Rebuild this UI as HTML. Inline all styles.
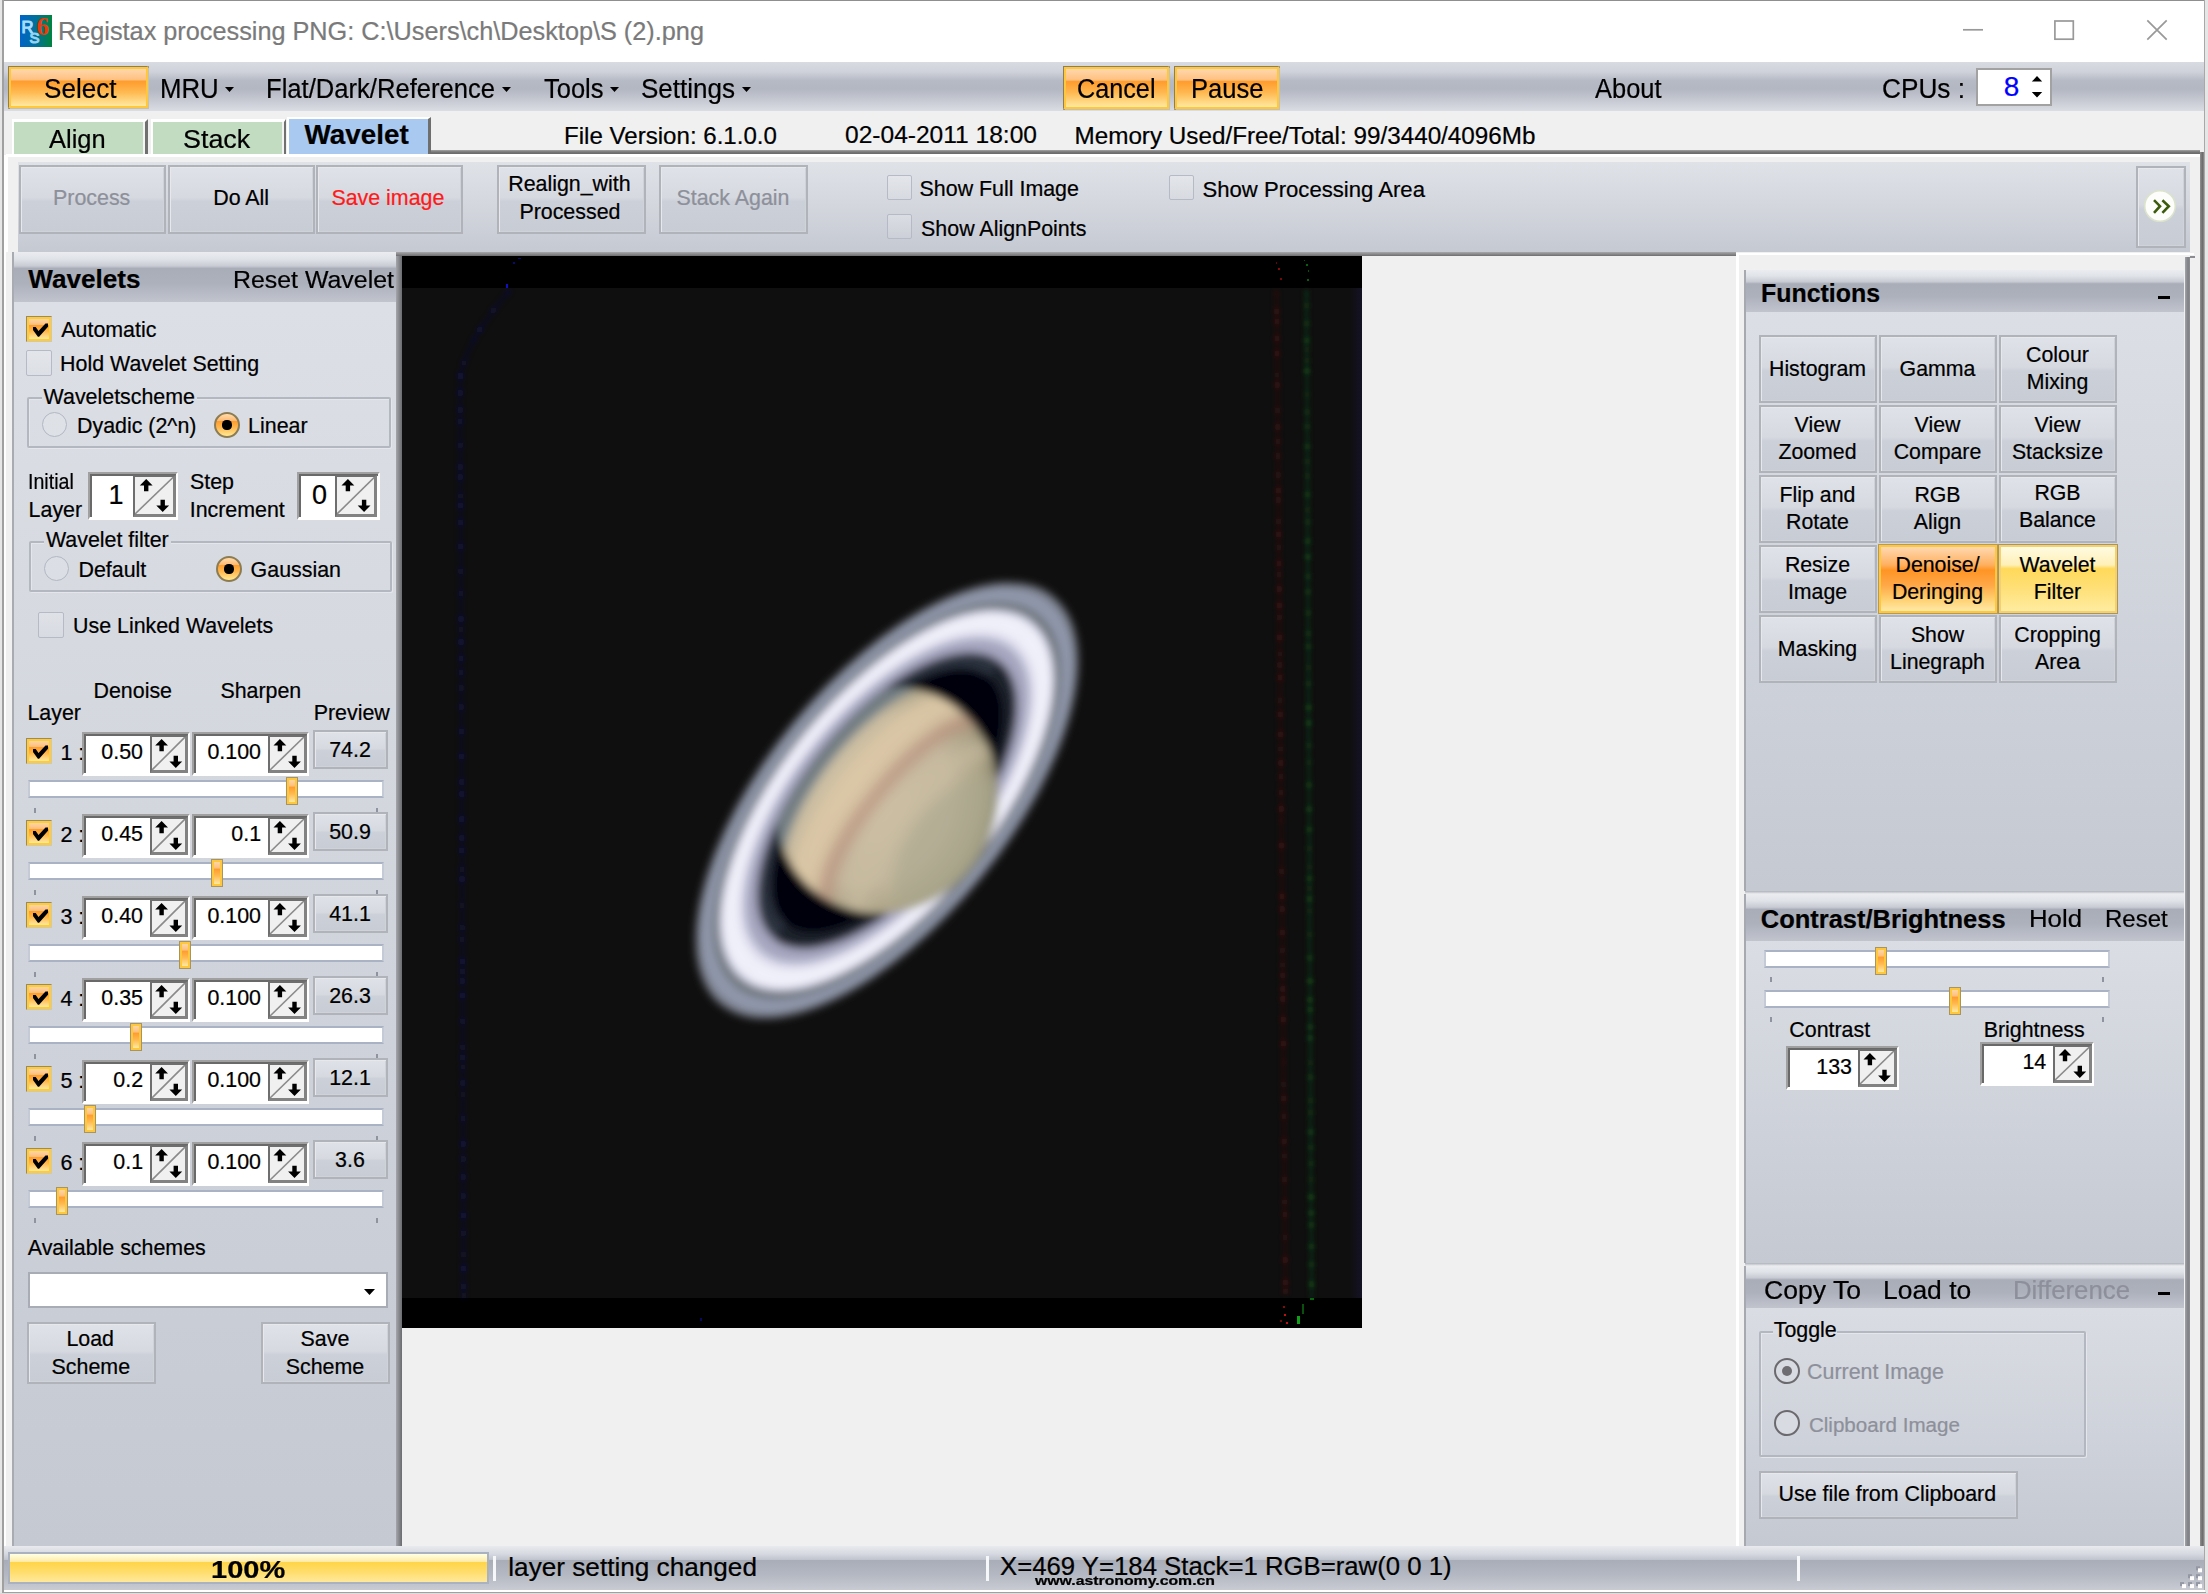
<!DOCTYPE html>
<html><head><meta charset="utf-8"><title>Registax</title>
<style>
html,body{margin:0;padding:0;}
body{width:2208px;height:1594px;position:relative;overflow:hidden;background:#f0f0f0;font-family:"Liberation Sans",sans-serif;}
.t{position:absolute;white-space:pre;-webkit-text-stroke:0.22px;}
div{box-sizing:border-box;}

.btn{position:absolute;border:2px solid #b0b3ba;box-shadow:inset 1px 1px 0 #e6e8ec, inset -1px -1px 0 #cfd2d9;background:linear-gradient(#dfe2e8 0%,#d6d9e0 47%,#ccd0d8 53%,#c8ccd5 100%);}
.obtn{position:absolute;border:2px solid #ffc83c;box-shadow:-1px -1px 0 0 #8e7e56, 1px 1px 0 0 #c8c0a8, 1px -1px 0 0 #a89870, -1px 1px 0 0 #a89870;background:linear-gradient(#ffd8ac 0%,#ffc080 29%,#ff9c2c 33%,#ffb850 62%,#ffe9a0 100%);}
.hdr{position:absolute;background:linear-gradient(#eaecf0 0%,#e0e3e8 14%,#c8cbd3 28%,#a9adb8 33%,#adb1bc 63%,#c1c4cd 100%);}
.panel{position:absolute;background:linear-gradient(#dde0e6,#c5c9d2);}
.cb{position:absolute;width:26px;height:26px;border:1.5px solid #b6bac4;border-radius:2px;background:linear-gradient(rgba(255,255,255,.22),rgba(255,255,255,.05));}
.cbc{position:absolute;width:26px;height:26px;border:1px solid #9a8a62;border-right-color:#cfc8b4;border-bottom-color:#cfc8b4;background:#ffcc33;}
.cbc i{position:absolute;left:2px;top:2px;right:2px;bottom:2px;background:linear-gradient(#ffd6a4 0%,#ffbe7c 28%,#ff9c2c 32%,#ffb850 62%,#ffe9a0 100%);}
.cbc svg{position:absolute;left:0;top:0;}
.rd{position:absolute;width:25px;height:25px;border-radius:50%;border:1.5px solid #b2b7c2;background:rgba(255,255,255,.12);}
.rdc{position:absolute;width:26px;height:26px;border-radius:50%;border:2px solid #8c7c54;background:linear-gradient(#ffdcaa 0%,#ffba74 30%,#ff9c2c 33%,#ffb850 62%,#ffe994 100%);}
.rdc i{position:absolute;left:6px;top:6px;width:10px;height:10px;border-radius:45%;background:#000;}
.sp{position:absolute;background:#fff;border-top:2px solid #a0a0a0;border-left:2px solid #a0a0a0;border-right:2px solid #fff;border-bottom:3px solid #fff;box-shadow:inset 2px 2px 0 #696969;}
.sb{position:absolute;background:#f0f0f0;border:2px solid #6e6e6e;border-right:3px solid #828282;border-bottom:3px solid #828282;}
.sb svg{position:absolute;left:0;top:0;}
.trk{position:absolute;background:#fff;border:2px solid #aab3c3;border-left-color:#c4cad6;border-right-color:#c4cad6;}
.thm{position:absolute;width:10px;height:26px;border:2px solid #ffc83c;box-shadow:0 0 0 1px #a89460;background:linear-gradient(#ffd6a4 0%,#ffbe7c 28%,#ff9c2c 32%,#ffb850 62%,#ffe9a0 100%);}
.tick{position:absolute;width:2px;height:5px;background:#8e939e;}
.gb{position:absolute;border:2px solid #b3b7c0;box-shadow:1px 1px 0 #e4e6eb, inset 1px 1px 0 #e4e6eb;border-radius:2px;}

</style></head><body>
<div style="position:absolute;left:0px;top:0px;width:2208px;height:1594px;background:#f0f0f0;"></div>
<div style="position:absolute;left:4px;top:1px;width:2200px;height:61px;background:#fff;"></div>
<div style="position:absolute;left:0px;top:0px;width:2208px;height:1px;background:#8f8f8f;"></div>
<div style="position:absolute;left:0px;top:0px;width:2px;height:1594px;background:#e6e6e6;"></div>
<div style="position:absolute;left:2px;top:0px;width:2px;height:1594px;background:#a0a0a0;"></div>
<div style="position:absolute;left:4px;top:62px;width:2px;height:1528px;background:#fff;"></div>
<div style="position:absolute;left:2204px;top:0px;width:1px;height:1594px;background:#a8a8a8;"></div>
<div style="position:absolute;left:2205px;top:0px;width:3px;height:1594px;background:#e6e6e6;"></div>
<svg style="position:absolute;left:20px;top:15px" width="32" height="32" viewBox="0 0 32 32">
<defs><linearGradient id="ig" x1="0" x2="1"><stop offset="0" stop-color="#0064c8"/><stop offset=".5" stop-color="#00709a"/><stop offset="1" stop-color="#00843c"/></linearGradient></defs>
<rect width="32" height="32" fill="url(#ig)"/>
<text x="1.6" y="17.6" font-family="Liberation Sans" font-size="16.5" fill="#a8dcff" stroke="#a8dcff" stroke-width="1.1">R</text>
<text x="9.4" y="28.4" font-family="Liberation Sans" font-size="15" fill="#94d2f2" stroke="#94d2f2" stroke-width="1.1">S</text>
<text x="16.6" y="19.8" font-family="Liberation Serif" font-size="25" font-weight="bold" fill="#f03808">6</text>
</svg>
<div class="t" style="left:58.0px;top:16.6px;font-size:25.27px;line-height:29.03px;color:#7a7a7a;">Registax processing PNG: C:\Users\ch\Desktop\S (2).png</div>
<svg style="position:absolute;left:1950px;top:10px" width="240" height="42" viewBox="0 0 240 42" fill="none" stroke="#999" stroke-width="1.7">
<line x1="13" y1="19.8" x2="33" y2="19.8"/>
<rect x="104.9" y="11" width="18.4" height="18.2"/>
<path d="M197.3 10.3 L216.7 29.7 M216.7 10.3 L197.3 29.7"/>
</svg>
<div style="position:absolute;left:4px;top:62px;width:2200px;height:49px;background:linear-gradient(#d8dbe1 0%,#cfd2da 20%,#b6bac5 38%,#b3b7c2 55%,#c6c9d2 78%,#dadde3 100%);"></div>
<div class="obtn" style="left:9px;top:67px;width:139px;height:41px"></div>
<div class="t" style="left:43.5px;top:74.3px;font-size:27.00px;line-height:31.02px;color:#000;transform:scaleX(0.9661);transform-origin:0 0;">Select</div>
<div class="t" style="left:160.3px;top:74.3px;font-size:27.00px;line-height:31.02px;color:#000;transform:scaleX(0.9546);transform-origin:0 0;">MRU</div>
<svg style="position:absolute;left:224.5px;top:87px" width="9" height="5" viewBox="0 0 9 5"><path d="M0 0H9L4.5 5Z" fill="#000"/></svg>
<div class="t" style="left:266.0px;top:74.3px;font-size:27.00px;line-height:31.02px;color:#000;transform:scaleX(0.9479);transform-origin:0 0;">Flat/Dark/Reference</div>
<svg style="position:absolute;left:502px;top:87px" width="9" height="5" viewBox="0 0 9 5"><path d="M0 0H9L4.5 5Z" fill="#000"/></svg>
<div class="t" style="left:543.5px;top:74.3px;font-size:27.00px;line-height:31.02px;color:#000;transform:scaleX(0.9440);transform-origin:0 0;">Tools</div>
<svg style="position:absolute;left:609.5px;top:87px" width="9" height="5" viewBox="0 0 9 5"><path d="M0 0H9L4.5 5Z" fill="#000"/></svg>
<div class="t" style="left:641.0px;top:74.3px;font-size:27.00px;line-height:31.02px;color:#000;transform:scaleX(0.9635);transform-origin:0 0;">Settings</div>
<svg style="position:absolute;left:741.5px;top:87px" width="9" height="5" viewBox="0 0 9 5"><path d="M0 0H9L4.5 5Z" fill="#000"/></svg>
<div class="obtn" style="left:1063.5px;top:67px;width:105.5px;height:41.5px"></div>
<div class="obtn" style="left:1174.8px;top:67px;width:104.5px;height:41.5px"></div>
<div class="t" style="left:1076.5px;top:74.3px;font-size:27.00px;line-height:31.02px;color:#000;transform:scaleX(0.9340);transform-origin:0 0;">Cancel</div>
<div class="t" style="left:1190.5px;top:74.3px;font-size:27.00px;line-height:31.02px;color:#000;transform:scaleX(0.9470);transform-origin:0 0;">Pause</div>
<div class="t" style="left:1594.5px;top:74.3px;font-size:27.00px;line-height:31.02px;color:#000;transform:scaleX(0.9425);transform-origin:0 0;">About</div>
<div class="t" style="left:1882.0px;top:74.3px;font-size:27.00px;line-height:31.02px;color:#000;transform:scaleX(0.9707);transform-origin:0 0;">CPUs :</div>
<div style="position:absolute;left:1976px;top:68px;width:76px;height:38px;background:#fff;border:2px solid #a2a2a2;"></div>
<div class="t" style="left:2003.8px;top:70.9px;font-size:28.00px;line-height:32.17px;color:#0000ff;">8</div>
<svg style="position:absolute;left:2031px;top:73px" width="12" height="28" viewBox="0 0 12 28"><path d="M0.8 8.6H11.2L6 3Z M0.8 19H11.2L6 24.6Z" fill="#000"/></svg>
<div style="position:absolute;left:4px;top:111px;width:2197px;height:44px;background:#f0f0f0;"></div>
<div style="position:absolute;left:11.5px;top:118.5px;width:136px;height:35.5px;background:#c1dcc1;border-left:2px solid #fff;border-top:3px solid #fff;border-right:3px solid #707070;box-shadow:inset -2px 0 0 #f4f4f4;"></div>
<div style="position:absolute;left:151px;top:118.5px;width:135px;height:35.5px;background:#c1dcc1;border-left:2px solid #fff;border-top:3px solid #fff;border-right:2px solid #707070;box-shadow:inset -2px 0 0 #f4f4f4;"></div>
<div style="position:absolute;left:287px;top:116.5px;width:144px;height:37.5px;background:#a9c9f0;border-left:2px solid #fff;border-top:2px solid #fff;border-right:3px solid #6e6e6e;"></div>
<div class="t" style="left:48.7px;top:123.7px;font-size:26.60px;line-height:30.56px;color:#000;transform:scaleX(0.9569);transform-origin:0 0;">Align</div>
<div class="t" style="left:183.0px;top:123.7px;font-size:26.60px;line-height:30.56px;color:#000;transform:scaleX(1.0101);transform-origin:0 0;">Stack</div>
<div class="t" style="left:304.6px;top:118.8px;font-size:27.82px;line-height:31.96px;color:#000;font-weight:bold;">Wavelet</div>
<div style="position:absolute;left:431px;top:150px;width:1769px;height:4px;background:linear-gradient(#a4a4a4,#777 50%,#6a6a6a);"></div>
<div style="position:absolute;left:6px;top:154px;width:2194px;height:2.5px;background:#fff;"></div>
<div style="position:absolute;left:6px;top:156px;width:2px;height:96px;background:#fff;"></div>
<div style="position:absolute;left:2200px;top:152px;width:4px;height:1394px;background:linear-gradient(90deg,#909090,#6c6c6c 60%,#8a8a8a);"></div>
<div style="position:absolute;left:396px;top:252px;width:1340px;height:4px;background:linear-gradient(#a8a8aa,#6e6e70);"></div>
<div style="position:absolute;left:1736px;top:252.5px;width:458px;height:2.5px;background:#fff;"></div>
<div class="t" style="left:564.0px;top:121.8px;font-size:24.10px;line-height:27.69px;color:#000;">File Version: 6.1.0.0</div>
<div class="t" style="left:845.0px;top:121.4px;font-size:24.55px;line-height:28.21px;color:#000;">02-04-2011 18:00</div>
<div class="t" style="left:1074.5px;top:121.6px;font-size:24.26px;line-height:27.87px;color:#000;">Memory Used/Free/Total: 99/3440/4096Mb</div>
<div style="position:absolute;left:18px;top:162px;width:2172px;height:90px;background:linear-gradient(#dfe2e7 0%,#d3d6dd 50%,#c5c9d2 100%);"></div>
<div class="btn" style="left:18.5px;top:164.5px;width:147.5px;height:69px"></div>
<div class="btn" style="left:167.5px;top:164.5px;width:147px;height:69px"></div>
<div class="btn" style="left:315.5px;top:164.5px;width:147px;height:69px"></div>
<div class="btn" style="left:496.5px;top:164.5px;width:149px;height:69px"></div>
<div class="btn" style="left:658.5px;top:164.5px;width:149px;height:69px"></div>
<div class="t" style="left:53.0px;top:185.9px;font-size:21.40px;line-height:24.59px;color:#8d909a;">Process</div>
<div class="t" style="left:213.2px;top:185.9px;font-size:21.40px;line-height:24.59px;color:#000;">Do All</div>
<div class="t" style="left:331.4px;top:185.9px;font-size:21.40px;line-height:24.59px;color:#ff1a1a;">Save image</div>
<div class="t" style="left:508.2px;top:172.1px;font-size:21.40px;line-height:24.59px;color:#000;">Realign_with</div>
<div class="t" style="left:519.4px;top:200.1px;font-size:21.40px;line-height:24.59px;color:#000;">Processed</div>
<div class="t" style="left:676.5px;top:185.9px;font-size:21.40px;line-height:24.59px;color:#8d909a;">Stack Again</div>
<div class="cb" style="left:886.5px;top:174.5px;width:25px;height:25px"></div>
<div class="cb" style="left:886.5px;top:214px;width:25px;height:25px"></div>
<div class="cb" style="left:1168.5px;top:174.5px;width:25px;height:25px"></div>
<div class="t" style="left:919.6px;top:177.1px;font-size:21.40px;line-height:24.59px;color:#000;">Show Full Image</div>
<div class="t" style="left:921.1px;top:216.6px;font-size:21.40px;line-height:24.59px;color:#000;">Show AlignPoints</div>
<div class="t" style="left:1202.5px;top:176.5px;font-size:22.11px;line-height:25.41px;color:#000;">Show Processing Area</div>
<div class="btn" style="left:2136px;top:166px;width:50px;height:82px"></div>
<svg style="position:absolute;left:2142px;top:188px" width="36" height="36" viewBox="0 0 36 36"><circle cx="18" cy="18" r="15.3" fill="#fdfefb" stroke="#dbe3cc" stroke-width="1.6"/><path d="M12 12.2l6 6-6 6.6M20.4 12.2l6.4 6-6.4 6.6" fill="none" stroke="#3c5c0c" stroke-width="2.6"/></svg>
<div style="position:absolute;left:12px;top:252px;width:2px;height:1294px;background:#a8abb2;"></div>
<div class="panel" style="left:14px;top:252px;width:382px;height:1294px"></div>
<div class="hdr" style="left:14px;top:252px;width:382px;height:50px"></div>
<div style="position:absolute;left:396px;top:256px;width:6px;height:1290px;background:linear-gradient(90deg,#a4a6ab,#808287 60%,#6a6c70);"></div>
<div class="t" style="left:28.3px;top:264.8px;font-size:26.08px;line-height:29.97px;color:#000;font-weight:bold;">Wavelets</div>
<div class="t" style="left:233.0px;top:265.7px;font-size:24.60px;line-height:28.27px;color:#000;transform:scaleX(1.0123);transform-origin:0 0;">Reset Wavelet</div>
<div class="cbc" style="left:26px;top:316px"><i></i><svg width="26" height="26" viewBox="-0.5 -0.5 26 26"><path d="M5.5 9.5 L8.2 9.5 L11 13.6 L18 6 L20.5 6 L20.5 9.2 L11.6 19.2 L10.4 19.2 L5.5 12.6 Z" fill="#000"/></svg></div>
<div class="t" style="left:61.3px;top:317.9px;font-size:21.40px;line-height:24.59px;color:#000;">Automatic</div>
<div class="cb" style="left:26px;top:350px;width:26px;height:26px"></div>
<div class="t" style="left:60.1px;top:351.9px;font-size:21.40px;line-height:24.59px;color:#000;">Hold Wavelet Setting</div>
<div class="gb" style="left:26.5px;top:396.5px;width:364px;height:51px"></div>
<div style="position:absolute;left:42px;top:394.5px;width:154.7px;height:5px;background:#dadde3;"></div>
<div class="t" style="left:43.6px;top:384.6px;font-size:21.40px;line-height:24.59px;color:#000;">Waveletscheme</div>
<div class="rd" style="left:42.0px;top:412.1px"></div>
<div class="t" style="left:77.0px;top:414.3px;font-size:21.40px;line-height:24.59px;color:#000;">Dyadic (2^n)</div>
<div class="rdc" style="left:214.3px;top:411.6px"><i></i></div>
<div class="t" style="left:248.1px;top:414.3px;font-size:21.40px;line-height:24.59px;color:#000;">Linear</div>
<div class="t" style="left:28.0px;top:470.0px;font-size:21.40px;line-height:24.59px;color:#000;transform:scaleX(0.9168);transform-origin:0 0;">Initial</div>
<div class="t" style="left:28.6px;top:498.0px;font-size:21.40px;line-height:24.59px;color:#000;">Layer</div>
<div class="t" style="left:190.0px;top:470.0px;font-size:21.40px;line-height:24.59px;color:#000;">Step</div>
<div class="t" style="left:189.7px;top:498.0px;font-size:21.40px;line-height:24.59px;color:#000;">Increment</div>
<div class="sp" style="left:88px;top:472px;width:90px;height:48px"></div>
<div class="sb" style="left:132.5px;top:475px;width:43.5px;height:42px"><svg width="38.5" height="37" viewBox="0 0 38.5 37"><line x1="0" y1="37" x2="38.5" y2="0" stroke="#8a8a8a" stroke-width="1.6"/><path d="M11.2 2 l6.4 6.6 h-4.2 v5.6 h-4.4 v-5.6 h-4.2z" fill="#000"/><path d="M27.7 35.0 l6.4 -6.6 h-4.2 v-5.6 h-4.4 v5.6 h-4.2z" fill="#000"/></svg></div>
<div class="t" style="left:108.5px;top:480.0px;font-size:27.00px;line-height:31.02px;color:#000;">1</div>
<div class="sp" style="left:296.5px;top:472px;width:83px;height:48px"></div>
<div class="sb" style="left:334.8px;top:475px;width:42.69999999999999px;height:42px"><svg width="37.69999999999999" height="37" viewBox="0 0 37.69999999999999 37"><line x1="0" y1="37" x2="37.69999999999999" y2="0" stroke="#8a8a8a" stroke-width="1.6"/><path d="M10.9 2 l6.4 6.6 h-4.2 v5.6 h-4.4 v-5.6 h-4.2z" fill="#000"/><path d="M27.1 35.0 l6.4 -6.6 h-4.2 v-5.6 h-4.4 v5.6 h-4.2z" fill="#000"/></svg></div>
<div class="t" style="left:312.0px;top:480.0px;font-size:27.00px;line-height:31.02px;color:#000;">0</div>
<div class="gb" style="left:28.5px;top:540.5px;width:363px;height:51px"></div>
<div style="position:absolute;left:43.6px;top:538.5px;width:127.4px;height:5px;background:#d8dbe1;"></div>
<div class="t" style="left:45.9px;top:527.8px;font-size:21.40px;line-height:24.59px;color:#000;">Wavelet filter</div>
<div class="rd" style="left:44.1px;top:556.1px"></div>
<div class="t" style="left:78.5px;top:558.2px;font-size:21.40px;line-height:24.59px;color:#000;">Default</div>
<div class="rdc" style="left:215.9px;top:555.6px"><i></i></div>
<div class="t" style="left:250.6px;top:558.2px;font-size:21.40px;line-height:24.59px;color:#000;">Gaussian</div>
<div class="cb" style="left:38px;top:612px;width:26px;height:26px"></div>
<div class="t" style="left:73.0px;top:613.6px;font-size:21.40px;line-height:24.59px;color:#000;">Use Linked Wavelets</div>
<div class="t" style="left:93.5px;top:679.3px;font-size:21.40px;line-height:24.59px;color:#000;">Denoise</div>
<div class="t" style="left:220.4px;top:679.3px;font-size:21.40px;line-height:24.59px;color:#000;">Sharpen</div>
<div class="t" style="left:27.4px;top:701.2px;font-size:21.40px;line-height:24.59px;color:#000;">Layer</div>
<div class="t" style="left:313.7px;top:701.2px;font-size:21.40px;line-height:24.59px;color:#000;">Preview</div>
<div class="cbc" style="left:26px;top:738px"><i></i><svg width="26" height="26" viewBox="-0.5 -0.5 26 26"><path d="M5.5 9.5 L8.2 9.5 L11 13.6 L18 6 L20.5 6 L20.5 9.2 L11.6 19.2 L10.4 19.2 L5.5 12.6 Z" fill="#000"/></svg></div>
<div class="t" style="left:60.4px;top:740.5px;font-size:21.50px;line-height:24.70px;color:#000;">1 :</div>
<div class="sp" style="left:82px;top:732px;width:108px;height:44px"></div>
<div class="sb" style="left:150px;top:735px;width:38px;height:38px"><svg width="33" height="33" viewBox="0 0 33 33"><line x1="0" y1="33" x2="33" y2="0" stroke="#8a8a8a" stroke-width="1.6"/><path d="M9.6 2 l6.4 6.6 h-4.2 v5.6 h-4.4 v-5.6 h-4.2z" fill="#000"/><path d="M23.8 31.0 l6.4 -6.6 h-4.2 v-5.6 h-4.4 v5.6 h-4.2z" fill="#000"/></svg></div>
<div class="t" style="left:101.3px;top:740.2px;font-size:21.40px;line-height:24.59px;color:#000;">0.50</div>
<div class="sp" style="left:192px;top:732px;width:117px;height:44px"></div>
<div class="sb" style="left:268px;top:735px;width:39px;height:38px"><svg width="34" height="33" viewBox="0 0 34 33"><line x1="0" y1="33" x2="34" y2="0" stroke="#8a8a8a" stroke-width="1.6"/><path d="M9.9 2 l6.4 6.6 h-4.2 v5.6 h-4.4 v-5.6 h-4.2z" fill="#000"/><path d="M24.5 31.0 l6.4 -6.6 h-4.2 v-5.6 h-4.4 v5.6 h-4.2z" fill="#000"/></svg></div>
<div class="t" style="left:207.4px;top:740.2px;font-size:21.40px;line-height:24.59px;color:#000;">0.100</div>
<div class="btn" style="left:312.5px;top:730px;width:75px;height:39px"></div>
<div class="t" style="left:329.2px;top:738.1px;font-size:21.40px;line-height:24.59px;color:#000;">74.2</div>
<div class="trk" style="left:28px;top:780px;width:356px;height:18px"></div>
<div class="thm" style="left:287.3px;top:778px"></div>
<div class="tick" style="left:34px;top:808px"></div><div class="tick" style="left:376px;top:808px"></div>
<div class="cbc" style="left:26px;top:820px"><i></i><svg width="26" height="26" viewBox="-0.5 -0.5 26 26"><path d="M5.5 9.5 L8.2 9.5 L11 13.6 L18 6 L20.5 6 L20.5 9.2 L11.6 19.2 L10.4 19.2 L5.5 12.6 Z" fill="#000"/></svg></div>
<div class="t" style="left:60.4px;top:822.5px;font-size:21.50px;line-height:24.70px;color:#000;">2 :</div>
<div class="sp" style="left:82px;top:814px;width:108px;height:44px"></div>
<div class="sb" style="left:150px;top:817px;width:38px;height:38px"><svg width="33" height="33" viewBox="0 0 33 33"><line x1="0" y1="33" x2="33" y2="0" stroke="#8a8a8a" stroke-width="1.6"/><path d="M9.6 2 l6.4 6.6 h-4.2 v5.6 h-4.4 v-5.6 h-4.2z" fill="#000"/><path d="M23.8 31.0 l6.4 -6.6 h-4.2 v-5.6 h-4.4 v5.6 h-4.2z" fill="#000"/></svg></div>
<div class="t" style="left:101.3px;top:822.2px;font-size:21.40px;line-height:24.59px;color:#000;">0.45</div>
<div class="sp" style="left:192px;top:814px;width:117px;height:44px"></div>
<div class="sb" style="left:268px;top:817px;width:39px;height:38px"><svg width="34" height="33" viewBox="0 0 34 33"><line x1="0" y1="33" x2="34" y2="0" stroke="#8a8a8a" stroke-width="1.6"/><path d="M9.9 2 l6.4 6.6 h-4.2 v5.6 h-4.4 v-5.6 h-4.2z" fill="#000"/><path d="M24.5 31.0 l6.4 -6.6 h-4.2 v-5.6 h-4.4 v5.6 h-4.2z" fill="#000"/></svg></div>
<div class="t" style="left:231.3px;top:822.2px;font-size:21.40px;line-height:24.59px;color:#000;">0.1</div>
<div class="btn" style="left:312.5px;top:812px;width:75px;height:39px"></div>
<div class="t" style="left:329.2px;top:820.1px;font-size:21.40px;line-height:24.59px;color:#000;">50.9</div>
<div class="trk" style="left:28px;top:862px;width:356px;height:18px"></div>
<div class="thm" style="left:211.5px;top:860px"></div>
<div class="tick" style="left:34px;top:890px"></div><div class="tick" style="left:376px;top:890px"></div>
<div class="cbc" style="left:26px;top:902px"><i></i><svg width="26" height="26" viewBox="-0.5 -0.5 26 26"><path d="M5.5 9.5 L8.2 9.5 L11 13.6 L18 6 L20.5 6 L20.5 9.2 L11.6 19.2 L10.4 19.2 L5.5 12.6 Z" fill="#000"/></svg></div>
<div class="t" style="left:60.4px;top:904.5px;font-size:21.50px;line-height:24.70px;color:#000;">3 :</div>
<div class="sp" style="left:82px;top:896px;width:108px;height:44px"></div>
<div class="sb" style="left:150px;top:899px;width:38px;height:38px"><svg width="33" height="33" viewBox="0 0 33 33"><line x1="0" y1="33" x2="33" y2="0" stroke="#8a8a8a" stroke-width="1.6"/><path d="M9.6 2 l6.4 6.6 h-4.2 v5.6 h-4.4 v-5.6 h-4.2z" fill="#000"/><path d="M23.8 31.0 l6.4 -6.6 h-4.2 v-5.6 h-4.4 v5.6 h-4.2z" fill="#000"/></svg></div>
<div class="t" style="left:101.3px;top:904.2px;font-size:21.40px;line-height:24.59px;color:#000;">0.40</div>
<div class="sp" style="left:192px;top:896px;width:117px;height:44px"></div>
<div class="sb" style="left:268px;top:899px;width:39px;height:38px"><svg width="34" height="33" viewBox="0 0 34 33"><line x1="0" y1="33" x2="34" y2="0" stroke="#8a8a8a" stroke-width="1.6"/><path d="M9.9 2 l6.4 6.6 h-4.2 v5.6 h-4.4 v-5.6 h-4.2z" fill="#000"/><path d="M24.5 31.0 l6.4 -6.6 h-4.2 v-5.6 h-4.4 v5.6 h-4.2z" fill="#000"/></svg></div>
<div class="t" style="left:207.4px;top:904.2px;font-size:21.40px;line-height:24.59px;color:#000;">0.100</div>
<div class="btn" style="left:312.5px;top:894px;width:75px;height:39px"></div>
<div class="t" style="left:329.2px;top:902.1px;font-size:21.40px;line-height:24.59px;color:#000;">41.1</div>
<div class="trk" style="left:28px;top:944px;width:356px;height:18px"></div>
<div class="thm" style="left:179.6px;top:942px"></div>
<div class="tick" style="left:34px;top:972px"></div><div class="tick" style="left:376px;top:972px"></div>
<div class="cbc" style="left:26px;top:984px"><i></i><svg width="26" height="26" viewBox="-0.5 -0.5 26 26"><path d="M5.5 9.5 L8.2 9.5 L11 13.6 L18 6 L20.5 6 L20.5 9.2 L11.6 19.2 L10.4 19.2 L5.5 12.6 Z" fill="#000"/></svg></div>
<div class="t" style="left:60.4px;top:986.5px;font-size:21.50px;line-height:24.70px;color:#000;">4 :</div>
<div class="sp" style="left:82px;top:978px;width:108px;height:44px"></div>
<div class="sb" style="left:150px;top:981px;width:38px;height:38px"><svg width="33" height="33" viewBox="0 0 33 33"><line x1="0" y1="33" x2="33" y2="0" stroke="#8a8a8a" stroke-width="1.6"/><path d="M9.6 2 l6.4 6.6 h-4.2 v5.6 h-4.4 v-5.6 h-4.2z" fill="#000"/><path d="M23.8 31.0 l6.4 -6.6 h-4.2 v-5.6 h-4.4 v5.6 h-4.2z" fill="#000"/></svg></div>
<div class="t" style="left:101.3px;top:986.2px;font-size:21.40px;line-height:24.59px;color:#000;">0.35</div>
<div class="sp" style="left:192px;top:978px;width:117px;height:44px"></div>
<div class="sb" style="left:268px;top:981px;width:39px;height:38px"><svg width="34" height="33" viewBox="0 0 34 33"><line x1="0" y1="33" x2="34" y2="0" stroke="#8a8a8a" stroke-width="1.6"/><path d="M9.9 2 l6.4 6.6 h-4.2 v5.6 h-4.4 v-5.6 h-4.2z" fill="#000"/><path d="M24.5 31.0 l6.4 -6.6 h-4.2 v-5.6 h-4.4 v5.6 h-4.2z" fill="#000"/></svg></div>
<div class="t" style="left:207.4px;top:986.2px;font-size:21.40px;line-height:24.59px;color:#000;">0.100</div>
<div class="btn" style="left:312.5px;top:976px;width:75px;height:39px"></div>
<div class="t" style="left:329.2px;top:984.1px;font-size:21.40px;line-height:24.59px;color:#000;">26.3</div>
<div class="trk" style="left:28px;top:1026px;width:356px;height:18px"></div>
<div class="thm" style="left:131.4px;top:1024px"></div>
<div class="tick" style="left:34px;top:1054px"></div><div class="tick" style="left:376px;top:1054px"></div>
<div class="cbc" style="left:26px;top:1066px"><i></i><svg width="26" height="26" viewBox="-0.5 -0.5 26 26"><path d="M5.5 9.5 L8.2 9.5 L11 13.6 L18 6 L20.5 6 L20.5 9.2 L11.6 19.2 L10.4 19.2 L5.5 12.6 Z" fill="#000"/></svg></div>
<div class="t" style="left:60.4px;top:1068.5px;font-size:21.50px;line-height:24.70px;color:#000;">5 :</div>
<div class="sp" style="left:82px;top:1060px;width:108px;height:44px"></div>
<div class="sb" style="left:150px;top:1063px;width:38px;height:38px"><svg width="33" height="33" viewBox="0 0 33 33"><line x1="0" y1="33" x2="33" y2="0" stroke="#8a8a8a" stroke-width="1.6"/><path d="M9.6 2 l6.4 6.6 h-4.2 v5.6 h-4.4 v-5.6 h-4.2z" fill="#000"/><path d="M23.8 31.0 l6.4 -6.6 h-4.2 v-5.6 h-4.4 v5.6 h-4.2z" fill="#000"/></svg></div>
<div class="t" style="left:113.3px;top:1068.2px;font-size:21.40px;line-height:24.59px;color:#000;">0.2</div>
<div class="sp" style="left:192px;top:1060px;width:117px;height:44px"></div>
<div class="sb" style="left:268px;top:1063px;width:39px;height:38px"><svg width="34" height="33" viewBox="0 0 34 33"><line x1="0" y1="33" x2="34" y2="0" stroke="#8a8a8a" stroke-width="1.6"/><path d="M9.9 2 l6.4 6.6 h-4.2 v5.6 h-4.4 v-5.6 h-4.2z" fill="#000"/><path d="M24.5 31.0 l6.4 -6.6 h-4.2 v-5.6 h-4.4 v5.6 h-4.2z" fill="#000"/></svg></div>
<div class="t" style="left:207.4px;top:1068.2px;font-size:21.40px;line-height:24.59px;color:#000;">0.100</div>
<div class="btn" style="left:312.5px;top:1058px;width:75px;height:39px"></div>
<div class="t" style="left:329.2px;top:1066.1px;font-size:21.40px;line-height:24.59px;color:#000;">12.1</div>
<div class="trk" style="left:28px;top:1108px;width:356px;height:18px"></div>
<div class="thm" style="left:85.2px;top:1106px"></div>
<div class="tick" style="left:34px;top:1136px"></div><div class="tick" style="left:376px;top:1136px"></div>
<div class="cbc" style="left:26px;top:1148px"><i></i><svg width="26" height="26" viewBox="-0.5 -0.5 26 26"><path d="M5.5 9.5 L8.2 9.5 L11 13.6 L18 6 L20.5 6 L20.5 9.2 L11.6 19.2 L10.4 19.2 L5.5 12.6 Z" fill="#000"/></svg></div>
<div class="t" style="left:60.4px;top:1150.5px;font-size:21.50px;line-height:24.70px;color:#000;">6 :</div>
<div class="sp" style="left:82px;top:1142px;width:108px;height:44px"></div>
<div class="sb" style="left:150px;top:1145px;width:38px;height:38px"><svg width="33" height="33" viewBox="0 0 33 33"><line x1="0" y1="33" x2="33" y2="0" stroke="#8a8a8a" stroke-width="1.6"/><path d="M9.6 2 l6.4 6.6 h-4.2 v5.6 h-4.4 v-5.6 h-4.2z" fill="#000"/><path d="M23.8 31.0 l6.4 -6.6 h-4.2 v-5.6 h-4.4 v5.6 h-4.2z" fill="#000"/></svg></div>
<div class="t" style="left:113.3px;top:1150.2px;font-size:21.40px;line-height:24.59px;color:#000;">0.1</div>
<div class="sp" style="left:192px;top:1142px;width:117px;height:44px"></div>
<div class="sb" style="left:268px;top:1145px;width:39px;height:38px"><svg width="34" height="33" viewBox="0 0 34 33"><line x1="0" y1="33" x2="34" y2="0" stroke="#8a8a8a" stroke-width="1.6"/><path d="M9.9 2 l6.4 6.6 h-4.2 v5.6 h-4.4 v-5.6 h-4.2z" fill="#000"/><path d="M24.5 31.0 l6.4 -6.6 h-4.2 v-5.6 h-4.4 v5.6 h-4.2z" fill="#000"/></svg></div>
<div class="t" style="left:207.4px;top:1150.2px;font-size:21.40px;line-height:24.59px;color:#000;">0.100</div>
<div class="btn" style="left:312.5px;top:1140px;width:75px;height:39px"></div>
<div class="t" style="left:335.1px;top:1148.1px;font-size:21.40px;line-height:24.59px;color:#000;">3.6</div>
<div class="trk" style="left:28px;top:1190px;width:356px;height:18px"></div>
<div class="thm" style="left:57.3px;top:1188px"></div>
<div class="tick" style="left:34px;top:1218px"></div><div class="tick" style="left:376px;top:1218px"></div>
<div class="t" style="left:27.8px;top:1236.2px;font-size:21.40px;line-height:24.59px;color:#000;">Available schemes</div>
<div style="position:absolute;left:28px;top:1272px;width:360px;height:36px;background:#fff;border:2px solid #a8acb4;"></div>
<svg style="position:absolute;left:363.5px;top:1288.5px" width="11" height="6" viewBox="0 0 11 6"><path d="M0 0H11L5.5 6Z" fill="#000"/></svg>
<div class="btn" style="left:26.5px;top:1322px;width:129px;height:62px"></div>
<div class="btn" style="left:260.5px;top:1322px;width:129px;height:62px"></div>
<div class="t" style="left:66.4px;top:1327.2px;font-size:21.40px;line-height:24.59px;color:#000;">Load</div>
<div class="t" style="left:51.6px;top:1354.9px;font-size:21.40px;line-height:24.59px;color:#000;">Scheme</div>
<div class="t" style="left:300.6px;top:1327.2px;font-size:21.40px;line-height:24.59px;color:#000;">Save</div>
<div class="t" style="left:285.7px;top:1354.9px;font-size:21.40px;line-height:24.59px;color:#000;">Scheme</div>
<svg style="position:absolute;left:402px;top:256px" width="960" height="1072" viewBox="402 256 960 1072">
<defs>
<filter id="bl" x="-20%" y="-20%" width="140%" height="140%"><feGaussianBlur stdDeviation="4.2"/></filter>
<filter id="bl2" x="-20%" y="-20%" width="140%" height="140%"><feGaussianBlur stdDeviation="6"/></filter>
<filter id="bl3" x="-50%" y="-50%" width="200%" height="200%"><feGaussianBlur stdDeviation="2.2"/></filter>
<linearGradient id="edg" x1="0" x2="1"><stop offset="0" stop-color="#15132a" stop-opacity="0"/><stop offset="1" stop-color="#15132a" stop-opacity=".85"/></linearGradient>
<clipPath id="near"><rect x="-300" y="-200" width="600" height="200"/></clipPath>
<clipPath id="pl"><ellipse cx="0" cy="0" rx="116" ry="108"/></clipPath>
<radialGradient id="pg" cx="45%" cy="42%" r="62%"><stop offset="0" stop-color="#cfc2a6"/><stop offset=".6" stop-color="#c4b89e"/><stop offset=".85" stop-color="#aaa286"/><stop offset="1" stop-color="#74705c"/></radialGradient>
</defs>
<rect x="402" y="256" width="960" height="1072" fill="#0f0f0f"/>
<rect x="402" y="256" width="960" height="32" fill="#000"/>
<rect x="402" y="1298" width="960" height="30" fill="#000"/>
<rect x="1350" y="288" width="12" height="1010" fill="url(#edg)"/>
<g filter="url(#bl)">
<g transform="translate(887 800.5) rotate(-50.8)">
<ellipse cx="0" cy="0" rx="180" ry="83.3" fill="#05060c"/>
<path d="M-263 0A263 121.8 0 1 0 263 0A263 121.8 0 1 0 -263 0ZM-237 0A237 109.7 0 1 1 237 0A237 109.7 0 1 1 -237 0Z" fill="#7c808c" fill-rule="evenodd"/><path d="M-255 0A255 118.1 0 1 0 255 0A255 118.1 0 1 0 -255 0ZM-241 0A241 111.6 0 1 1 241 0A241 111.6 0 1 1 -241 0Z" fill="#9098ac" fill-rule="evenodd"/><path d="M-237 0A237 109.7 0 1 0 237 0A237 109.7 0 1 0 -237 0ZM-231 0A231 107.0 0 1 1 231 0A231 107.0 0 1 1 -231 0Z" fill="#6c7678" fill-rule="evenodd"/><path d="M-231 0A231 107.0 0 1 0 231 0A231 107.0 0 1 0 -231 0ZM-179 0A179 82.9 0 1 1 179 0A179 82.9 0 1 1 -179 0Z" fill="#a6a6c0" fill-rule="evenodd"/><path d="M-229 0A229 106.0 0 1 0 229 0A229 106.0 0 1 0 -229 0ZM-196 0A196 90.7 0 1 1 196 0A196 90.7 0 1 1 -196 0Z" fill="#d8d8ea" fill-rule="evenodd"/><path d="M-226 0A226 104.6 0 1 0 226 0A226 104.6 0 1 0 -226 0ZM-204 0A204 94.5 0 1 1 204 0A204 94.5 0 1 1 -204 0Z" fill="#f0f0fa" fill-rule="evenodd"/><path d="M-179 0A179 82.9 0 1 0 179 0A179 82.9 0 1 0 -179 0ZM-160 0A160 74.1 0 1 1 160 0A160 74.1 0 1 1 -160 0Z" fill="#4a5460" fill-rule="evenodd" opacity=".35"/>
<ellipse cx="0" cy="0" rx="116" ry="108" fill="url(#pg)"/>
<g clip-path="url(#pl)">
  <g filter="url(#bl2)">
  <path d="M-124.0 1.0A124.0 38.0 0 0 1 124.0 1.0" fill="none" stroke="#dcc8a6" stroke-width="32" opacity=".9"/>
  <path d="M-114.0 20.0A114.0 32.0 0 0 1 114.0 20.0" fill="none" stroke="#b88e7a" stroke-width="12" opacity=".9"/>
  <path d="M-104.0 52.0A104.0 32.0 0 0 1 104.0 52.0" fill="none" stroke="#c9bca0" stroke-width="18" opacity=".6"/>
  <ellipse cx="8" cy="80" rx="80" ry="44" fill="#a8a68e" opacity=".6"/>
  </g>
</g>
<g clip-path="url(#near)"><g clip-path="url(#pl)"><path d="M-181 0A181 83.8 0 1 0 181 0A181 83.8 0 1 0 -181 0ZM-146 0A146 67.6 0 1 1 146 0A146 67.6 0 1 1 -146 0Z" fill="#74828a" fill-rule="evenodd" opacity=".85"/></g><path d="M-263 0A263 121.8 0 1 0 263 0A263 121.8 0 1 0 -263 0ZM-237 0A237 109.7 0 1 1 237 0A237 109.7 0 1 1 -237 0Z" fill="#7c808c" fill-rule="evenodd"/><path d="M-255 0A255 118.1 0 1 0 255 0A255 118.1 0 1 0 -255 0ZM-241 0A241 111.6 0 1 1 241 0A241 111.6 0 1 1 -241 0Z" fill="#9098ac" fill-rule="evenodd"/><path d="M-237 0A237 109.7 0 1 0 237 0A237 109.7 0 1 0 -237 0ZM-231 0A231 107.0 0 1 1 231 0A231 107.0 0 1 1 -231 0Z" fill="#6c7678" fill-rule="evenodd"/><path d="M-231 0A231 107.0 0 1 0 231 0A231 107.0 0 1 0 -231 0ZM-179 0A179 82.9 0 1 1 179 0A179 82.9 0 1 1 -179 0Z" fill="#a6a6c0" fill-rule="evenodd"/><path d="M-229 0A229 106.0 0 1 0 229 0A229 106.0 0 1 0 -229 0ZM-196 0A196 90.7 0 1 1 196 0A196 90.7 0 1 1 -196 0Z" fill="#d8d8ea" fill-rule="evenodd"/><path d="M-226 0A226 104.6 0 1 0 226 0A226 104.6 0 1 0 -226 0ZM-204 0A204 94.5 0 1 1 204 0A204 94.5 0 1 1 -204 0Z" fill="#f0f0fa" fill-rule="evenodd"/><path d="M-179 0A179 82.9 0 1 0 179 0A179 82.9 0 1 0 -179 0ZM-160 0A160 74.1 0 1 1 160 0A160 74.1 0 1 1 -160 0Z" fill="#4a5460" fill-rule="evenodd" opacity=".35"/></g>
</g>
</g>
<g filter="url(#bl3)"><circle cx="508.4" cy="292.0" r="3" fill="#1c1c8c" opacity="0.19"/><circle cx="493.4" cy="310.3" r="3" fill="#1c1c8c" opacity="0.24"/><circle cx="479.9" cy="329.5" r="3" fill="#1c1c8c" opacity="0.32"/><circle cx="473.9" cy="339.6" r="3" fill="#1c1c8c" opacity="0.12"/><circle cx="463.5" cy="362.9" r="3" fill="#1c1c8c" opacity="0.20"/><circle cx="460.4" cy="375.9" r="3" fill="#1c1c8c" opacity="0.45"/><circle cx="460.1" cy="392.8" r="3" fill="#1c1c8c" opacity="0.39"/><circle cx="460.1" cy="409.9" r="3" fill="#1c1c8c" opacity="0.33"/><circle cx="460.2" cy="421.5" r="3" fill="#1c1c8c" opacity="0.33"/><circle cx="460.3" cy="445.3" r="3" fill="#1c1c8c" opacity="0.29"/><circle cx="460.3" cy="466.9" r="3" fill="#1c1c8c" opacity="0.34"/><circle cx="460.4" cy="477.0" r="3" fill="#1c1c8c" opacity="0.37"/><circle cx="460.5" cy="496.0" r="3" fill="#1c1c8c" opacity="0.21"/><circle cx="460.5" cy="505.5" r="3" fill="#1c1c8c" opacity="0.40"/><circle cx="460.6" cy="522.6" r="3" fill="#1c1c8c" opacity="0.36"/><circle cx="460.7" cy="546.5" r="3" fill="#1c1c8c" opacity="0.35"/><circle cx="460.8" cy="571.2" r="3" fill="#1c1c8c" opacity="0.25"/><circle cx="460.9" cy="593.8" r="3" fill="#1c1c8c" opacity="0.26"/><circle cx="461.0" cy="618.7" r="3" fill="#1c1c8c" opacity="0.41"/><circle cx="461.0" cy="629.3" r="3" fill="#1c1c8c" opacity="0.16"/><circle cx="461.0" cy="642.0" r="3" fill="#1c1c8c" opacity="0.44"/><circle cx="461.1" cy="658.4" r="3" fill="#1c1c8c" opacity="0.32"/><circle cx="461.2" cy="672.6" r="3" fill="#1c1c8c" opacity="0.28"/><circle cx="461.2" cy="688.1" r="3" fill="#1c1c8c" opacity="0.23"/><circle cx="461.3" cy="707.1" r="3" fill="#1c1c8c" opacity="0.31"/><circle cx="461.4" cy="731.4" r="3" fill="#1c1c8c" opacity="0.34"/><circle cx="461.5" cy="756.2" r="3" fill="#1c1c8c" opacity="0.40"/><circle cx="461.6" cy="782.1" r="3" fill="#1c1c8c" opacity="0.34"/><circle cx="461.7" cy="793.9" r="3" fill="#1c1c8c" opacity="0.40"/><circle cx="461.8" cy="819.2" r="3" fill="#1c1c8c" opacity="0.42"/><circle cx="461.8" cy="837.9" r="3" fill="#1c1c8c" opacity="0.35"/><circle cx="461.9" cy="850.5" r="3" fill="#1c1c8c" opacity="0.39"/><circle cx="462.0" cy="869.3" r="3" fill="#1c1c8c" opacity="0.21"/><circle cx="462.0" cy="879.3" r="3" fill="#1c1c8c" opacity="0.40"/><circle cx="462.1" cy="905.2" r="3" fill="#1c1c8c" opacity="0.14"/><circle cx="462.2" cy="927.8" r="3" fill="#1c1c8c" opacity="0.25"/><circle cx="462.2" cy="939.3" r="3" fill="#1c1c8c" opacity="0.21"/><circle cx="462.3" cy="961.4" r="3" fill="#1c1c8c" opacity="0.41"/><circle cx="462.4" cy="971.2" r="3" fill="#1c1c8c" opacity="0.32"/><circle cx="462.4" cy="980.9" r="3" fill="#1c1c8c" opacity="0.35"/><circle cx="462.5" cy="995.6" r="3" fill="#1c1c8c" opacity="0.41"/><circle cx="462.6" cy="1021.2" r="3" fill="#1c1c8c" opacity="0.28"/><circle cx="462.7" cy="1047.2" r="3" fill="#1c1c8c" opacity="0.22"/><circle cx="462.7" cy="1057.5" r="3" fill="#1c1c8c" opacity="0.31"/><circle cx="462.7" cy="1067.0" r="3" fill="#1c1c8c" opacity="0.18"/><circle cx="462.8" cy="1083.0" r="3" fill="#1c1c8c" opacity="0.32"/><circle cx="462.9" cy="1094.6" r="3" fill="#1c1c8c" opacity="0.13"/><circle cx="463.0" cy="1118.4" r="3" fill="#1c1c8c" opacity="0.22"/><circle cx="463.1" cy="1143.7" r="3" fill="#1c1c8c" opacity="0.42"/><circle cx="463.1" cy="1159.1" r="3" fill="#1c1c8c" opacity="0.27"/><circle cx="463.2" cy="1176.9" r="3" fill="#1c1c8c" opacity="0.33"/><circle cx="463.3" cy="1196.1" r="3" fill="#1c1c8c" opacity="0.30"/><circle cx="463.3" cy="1215.6" r="3" fill="#1c1c8c" opacity="0.43"/><circle cx="463.4" cy="1233.2" r="3" fill="#1c1c8c" opacity="0.26"/><circle cx="463.5" cy="1254.5" r="3" fill="#1c1c8c" opacity="0.19"/><circle cx="463.6" cy="1268.6" r="3" fill="#1c1c8c" opacity="0.44"/><circle cx="463.6" cy="1286.5" r="3" fill="#1c1c8c" opacity="0.30"/><circle cx="463.7" cy="1295.6" r="3" fill="#1c1c8c" opacity="0.25"/><circle cx="1276.5" cy="292.0" r="3" fill="#7a1c1c" opacity="0.12"/><circle cx="1276.7" cy="311.5" r="3" fill="#7a1c1c" opacity="0.33"/><circle cx="1276.8" cy="321.5" r="3" fill="#7a1c1c" opacity="0.32"/><circle cx="1276.9" cy="338.4" r="3" fill="#7a1c1c" opacity="0.34"/><circle cx="1277.1" cy="353.4" r="3" fill="#7a1c1c" opacity="0.35"/><circle cx="1277.3" cy="375.0" r="3" fill="#7a1c1c" opacity="0.12"/><circle cx="1277.4" cy="385.0" r="3" fill="#7a1c1c" opacity="0.34"/><circle cx="1277.6" cy="410.4" r="3" fill="#7a1c1c" opacity="0.20"/><circle cx="1277.7" cy="427.1" r="3" fill="#7a1c1c" opacity="0.31"/><circle cx="1277.9" cy="441.6" r="3" fill="#7a1c1c" opacity="0.24"/><circle cx="1278.0" cy="455.9" r="3" fill="#7a1c1c" opacity="0.24"/><circle cx="1278.2" cy="475.0" r="3" fill="#7a1c1c" opacity="0.21"/><circle cx="1278.3" cy="490.4" r="3" fill="#7a1c1c" opacity="0.37"/><circle cx="1278.4" cy="499.9" r="3" fill="#7a1c1c" opacity="0.30"/><circle cx="1278.6" cy="521.4" r="3" fill="#7a1c1c" opacity="0.22"/><circle cx="1278.7" cy="534.2" r="3" fill="#7a1c1c" opacity="0.38"/><circle cx="1278.8" cy="547.2" r="3" fill="#7a1c1c" opacity="0.18"/><circle cx="1279.0" cy="563.6" r="3" fill="#7a1c1c" opacity="0.35"/><circle cx="1279.1" cy="574.3" r="3" fill="#7a1c1c" opacity="0.22"/><circle cx="1279.2" cy="589.0" r="3" fill="#7a1c1c" opacity="0.39"/><circle cx="1279.3" cy="605.5" r="3" fill="#7a1c1c" opacity="0.40"/><circle cx="1279.4" cy="617.3" r="3" fill="#7a1c1c" opacity="0.23"/><circle cx="1279.6" cy="637.4" r="3" fill="#7a1c1c" opacity="0.41"/><circle cx="1279.8" cy="654.1" r="3" fill="#7a1c1c" opacity="0.19"/><circle cx="1279.9" cy="665.1" r="3" fill="#7a1c1c" opacity="0.29"/><circle cx="1280.0" cy="677.4" r="3" fill="#7a1c1c" opacity="0.38"/><circle cx="1280.2" cy="700.6" r="3" fill="#7a1c1c" opacity="0.17"/><circle cx="1280.3" cy="714.4" r="3" fill="#7a1c1c" opacity="0.38"/><circle cx="1280.5" cy="734.3" r="3" fill="#7a1c1c" opacity="0.38"/><circle cx="1280.6" cy="749.1" r="3" fill="#7a1c1c" opacity="0.16"/><circle cx="1280.8" cy="763.1" r="3" fill="#7a1c1c" opacity="0.38"/><circle cx="1280.9" cy="776.7" r="3" fill="#7a1c1c" opacity="0.23"/><circle cx="1281.0" cy="792.8" r="3" fill="#7a1c1c" opacity="0.25"/><circle cx="1281.2" cy="808.8" r="3" fill="#7a1c1c" opacity="0.42"/><circle cx="1281.3" cy="820.4" r="3" fill="#7a1c1c" opacity="0.11"/><circle cx="1281.5" cy="845.4" r="3" fill="#7a1c1c" opacity="0.41"/><circle cx="1281.7" cy="871.2" r="3" fill="#7a1c1c" opacity="0.26"/><circle cx="1282.0" cy="896.4" r="3" fill="#7a1c1c" opacity="0.43"/><circle cx="1282.1" cy="909.2" r="3" fill="#7a1c1c" opacity="0.36"/><circle cx="1282.3" cy="932.4" r="3" fill="#7a1c1c" opacity="0.34"/><circle cx="1282.4" cy="950.2" r="3" fill="#7a1c1c" opacity="0.21"/><circle cx="1282.6" cy="965.0" r="3" fill="#7a1c1c" opacity="0.19"/><circle cx="1282.7" cy="975.2" r="3" fill="#7a1c1c" opacity="0.31"/><circle cx="1282.8" cy="989.0" r="3" fill="#7a1c1c" opacity="0.39"/><circle cx="1282.9" cy="998.8" r="3" fill="#7a1c1c" opacity="0.42"/><circle cx="1283.1" cy="1019.6" r="3" fill="#7a1c1c" opacity="0.42"/><circle cx="1283.3" cy="1043.8" r="3" fill="#7a1c1c" opacity="0.42"/><circle cx="1283.5" cy="1062.6" r="3" fill="#7a1c1c" opacity="0.12"/><circle cx="1283.6" cy="1084.3" r="3" fill="#7a1c1c" opacity="0.17"/><circle cx="1283.8" cy="1098.4" r="3" fill="#7a1c1c" opacity="0.34"/><circle cx="1283.9" cy="1116.3" r="3" fill="#7a1c1c" opacity="0.25"/><circle cx="1284.2" cy="1141.3" r="3" fill="#7a1c1c" opacity="0.32"/><circle cx="1284.3" cy="1156.1" r="3" fill="#7a1c1c" opacity="0.20"/><circle cx="1284.5" cy="1179.8" r="3" fill="#7a1c1c" opacity="0.27"/><circle cx="1284.7" cy="1202.1" r="3" fill="#7a1c1c" opacity="0.23"/><circle cx="1284.8" cy="1214.4" r="3" fill="#7a1c1c" opacity="0.29"/><circle cx="1285.0" cy="1237.3" r="3" fill="#7a1c1c" opacity="0.17"/><circle cx="1285.2" cy="1259.8" r="3" fill="#7a1c1c" opacity="0.42"/><circle cx="1285.4" cy="1282.5" r="3" fill="#7a1c1c" opacity="0.39"/><circle cx="1285.5" cy="1291.6" r="3" fill="#7a1c1c" opacity="0.32"/><circle cx="1306.5" cy="292.0" r="3" fill="#1c6a24" opacity="0.16"/><circle cx="1306.6" cy="305.6" r="3" fill="#1c6a24" opacity="0.25"/><circle cx="1306.7" cy="323.6" r="3" fill="#1c6a24" opacity="0.31"/><circle cx="1306.8" cy="340.6" r="3" fill="#1c6a24" opacity="0.46"/><circle cx="1306.8" cy="349.6" r="3" fill="#1c6a24" opacity="0.16"/><circle cx="1306.9" cy="360.8" r="3" fill="#1c6a24" opacity="0.19"/><circle cx="1306.9" cy="371.0" r="3" fill="#1c6a24" opacity="0.54"/><circle cx="1307.0" cy="394.5" r="3" fill="#1c6a24" opacity="0.17"/><circle cx="1307.1" cy="412.0" r="3" fill="#1c6a24" opacity="0.27"/><circle cx="1307.2" cy="426.4" r="3" fill="#1c6a24" opacity="0.28"/><circle cx="1307.3" cy="446.4" r="3" fill="#1c6a24" opacity="0.38"/><circle cx="1307.4" cy="461.5" r="3" fill="#1c6a24" opacity="0.22"/><circle cx="1307.4" cy="476.1" r="3" fill="#1c6a24" opacity="0.19"/><circle cx="1307.5" cy="494.5" r="3" fill="#1c6a24" opacity="0.43"/><circle cx="1307.6" cy="510.0" r="3" fill="#1c6a24" opacity="0.17"/><circle cx="1307.7" cy="522.0" r="3" fill="#1c6a24" opacity="0.29"/><circle cx="1307.8" cy="541.3" r="3" fill="#1c6a24" opacity="0.46"/><circle cx="1307.8" cy="556.8" r="3" fill="#1c6a24" opacity="0.47"/><circle cx="1307.9" cy="576.4" r="3" fill="#1c6a24" opacity="0.32"/><circle cx="1308.0" cy="591.7" r="3" fill="#1c6a24" opacity="0.34"/><circle cx="1308.1" cy="612.7" r="3" fill="#1c6a24" opacity="0.31"/><circle cx="1308.2" cy="633.5" r="3" fill="#1c6a24" opacity="0.33"/><circle cx="1308.3" cy="646.6" r="3" fill="#1c6a24" opacity="0.36"/><circle cx="1308.4" cy="667.4" r="3" fill="#1c6a24" opacity="0.17"/><circle cx="1308.5" cy="683.7" r="3" fill="#1c6a24" opacity="0.31"/><circle cx="1308.6" cy="707.6" r="3" fill="#1c6a24" opacity="0.52"/><circle cx="1308.7" cy="723.0" r="3" fill="#1c6a24" opacity="0.51"/><circle cx="1308.8" cy="745.4" r="3" fill="#1c6a24" opacity="0.25"/><circle cx="1308.9" cy="762.3" r="3" fill="#1c6a24" opacity="0.19"/><circle cx="1309.0" cy="785.1" r="3" fill="#1c6a24" opacity="0.41"/><circle cx="1309.1" cy="809.2" r="3" fill="#1c6a24" opacity="0.46"/><circle cx="1309.2" cy="829.6" r="3" fill="#1c6a24" opacity="0.44"/><circle cx="1309.3" cy="848.2" r="3" fill="#1c6a24" opacity="0.18"/><circle cx="1309.4" cy="867.1" r="3" fill="#1c6a24" opacity="0.14"/><circle cx="1309.4" cy="878.6" r="3" fill="#1c6a24" opacity="0.46"/><circle cx="1309.5" cy="888.3" r="3" fill="#1c6a24" opacity="0.18"/><circle cx="1309.5" cy="899.0" r="3" fill="#1c6a24" opacity="0.50"/><circle cx="1309.6" cy="911.1" r="3" fill="#1c6a24" opacity="0.15"/><circle cx="1309.7" cy="934.4" r="3" fill="#1c6a24" opacity="0.19"/><circle cx="1309.8" cy="957.7" r="3" fill="#1c6a24" opacity="0.42"/><circle cx="1310.0" cy="980.9" r="3" fill="#1c6a24" opacity="0.53"/><circle cx="1310.0" cy="999.8" r="3" fill="#1c6a24" opacity="0.47"/><circle cx="1310.1" cy="1009.4" r="3" fill="#1c6a24" opacity="0.45"/><circle cx="1310.2" cy="1027.1" r="3" fill="#1c6a24" opacity="0.43"/><circle cx="1310.2" cy="1037.9" r="3" fill="#1c6a24" opacity="0.45"/><circle cx="1310.4" cy="1062.8" r="3" fill="#1c6a24" opacity="0.16"/><circle cx="1310.4" cy="1077.3" r="3" fill="#1c6a24" opacity="0.37"/><circle cx="1310.6" cy="1100.4" r="3" fill="#1c6a24" opacity="0.24"/><circle cx="1310.6" cy="1112.4" r="3" fill="#1c6a24" opacity="0.24"/><circle cx="1310.7" cy="1131.9" r="3" fill="#1c6a24" opacity="0.45"/><circle cx="1310.8" cy="1147.6" r="3" fill="#1c6a24" opacity="0.29"/><circle cx="1310.9" cy="1163.4" r="3" fill="#1c6a24" opacity="0.28"/><circle cx="1310.9" cy="1179.5" r="3" fill="#1c6a24" opacity="0.17"/><circle cx="1311.0" cy="1197.0" r="3" fill="#1c6a24" opacity="0.54"/><circle cx="1311.1" cy="1213.0" r="3" fill="#1c6a24" opacity="0.45"/><circle cx="1311.2" cy="1224.7" r="3" fill="#1c6a24" opacity="0.42"/><circle cx="1311.3" cy="1246.6" r="3" fill="#1c6a24" opacity="0.42"/><circle cx="1311.4" cy="1264.4" r="3" fill="#1c6a24" opacity="0.34"/><circle cx="1311.5" cy="1284.3" r="3" fill="#1c6a24" opacity="0.51"/><circle cx="1311.5" cy="1295.8" r="3" fill="#1c6a24" opacity="0.18"/><polyline points="508.4,292 492.1,312 478.4,332 467.8,352 461.0,372 460.0,392 460.1,412 460.2,432 460.3,452 460.4,472 460.4,492 460.5,512 460.6,532 460.7,552 460.8,572 460.8,592 460.9,612 461.0,632 461.1,652 461.2,672 461.2,692 461.3,712 461.4,732 461.5,752 461.6,772 461.6,792 461.7,812 461.8,832 461.9,852 462.0,872 462.0,892 462.1,912 462.2,932 462.3,952 462.4,972 462.4,992 462.5,1012 462.6,1032 462.7,1052 462.8,1072 462.8,1092 462.9,1112 463.0,1132 463.1,1152 463.2,1172 463.2,1192 463.3,1212 463.4,1232 463.5,1252 463.6,1272 463.6,1292" fill="none" stroke="#14145c" stroke-width="5" opacity="0.2"/><polyline points="1276.5,292 1276.7,312 1276.9,332 1277.1,352 1277.2,372 1277.4,392 1277.6,412 1277.8,432 1278.0,452 1278.1,472 1278.3,492 1278.5,512 1278.7,532 1278.9,552 1279.0,572 1279.2,592 1279.4,612 1279.6,632 1279.8,652 1279.9,672 1280.1,692 1280.3,712 1280.5,732 1280.7,752 1280.8,772 1281.0,792 1281.2,812 1281.4,832 1281.6,852 1281.7,872 1281.9,892 1282.1,912 1282.3,932 1282.5,952 1282.6,972 1282.8,992 1283.0,1012 1283.2,1032 1283.4,1052 1283.5,1072 1283.7,1092 1283.9,1112 1284.1,1132 1284.3,1152 1284.4,1172 1284.6,1192 1284.8,1212 1285.0,1232 1285.2,1252 1285.3,1272 1285.5,1292" fill="none" stroke="#5a1414" stroke-width="5" opacity="0.2"/><polyline points="1306.5,292 1306.6,312 1306.7,332 1306.8,352 1306.9,372 1307.0,392 1307.1,412 1307.2,432 1307.3,452 1307.4,472 1307.5,492 1307.6,512 1307.7,532 1307.8,552 1307.9,572 1308.0,592 1308.1,612 1308.2,632 1308.3,652 1308.4,672 1308.5,692 1308.6,712 1308.7,732 1308.8,752 1308.9,772 1309.0,792 1309.1,812 1309.2,832 1309.3,852 1309.4,872 1309.5,892 1309.6,912 1309.7,932 1309.8,952 1309.9,972 1310.0,992 1310.1,1012 1310.2,1032 1310.3,1052 1310.4,1072 1310.5,1092 1310.6,1112 1310.7,1132 1310.8,1152 1310.9,1172 1311.0,1192 1311.1,1212 1311.2,1232 1311.3,1252 1311.4,1272 1311.5,1292" fill="none" stroke="#145a1c" stroke-width="5" opacity="0.24"/></g><g fill="#1010c0"><rect x="506" y="284" width="2" height="4"/><rect x="513" y="262" width="2" height="2" opacity=".6"/><rect x="518" y="258" width="3" height="1" opacity=".6"/><rect x="700" y="1318" width="2" height="3" opacity=".5"/></g><g fill="#c01010"><rect x="1278" y="268" width="2" height="2" opacity=".7"/><rect x="1280" y="278" width="2" height="2" opacity=".6"/><rect x="1276" y="262" width="1" height="2" opacity=".5"/><rect x="1284" y="1314" width="2" height="2"/><rect x="1286" y="1322" width="2" height="2"/><rect x="1283" y="1306" width="2" height="2" opacity=".7"/><rect x="1280" y="1320" width="2" height="2" opacity=".6"/></g><g fill="#10a018"><rect x="1297" y="1316" width="3" height="8"/><rect x="1302" y="1304" width="2" height="10" opacity=".5"/><rect x="1310" y="1298" width="4" height="2" opacity=".6"/><rect x="1306" y="264" width="2" height="2" opacity=".6"/><rect x="1308" y="270" width="1" height="2" opacity=".5"/><rect x="1307" y="279" width="2" height="2" opacity=".6"/><rect x="1304" y="260" width="1" height="1" opacity=".5"/></g></svg>
<div style="position:absolute;left:1736px;top:253px;width:3px;height:1293px;background:#fff;"></div>
<div style="position:absolute;left:1739px;top:255px;width:446px;height:15px;background:#f0f0f0;"></div>
<div style="position:absolute;left:1740px;top:255px;width:5px;height:1291px;background:#f0f0f0;"></div>
<div style="position:absolute;left:2185px;top:257px;width:5px;height:1289px;background:linear-gradient(90deg,#a2a4a9,#7e8085 60%,#8c8e93);"></div>
<div style="position:absolute;left:2190px;top:256px;width:5px;height:2px;background:#8a8c90;"></div>
<div class="panel" style="left:1745px;top:270px;width:439px;height:621px"></div>
<div class="hdr" style="left:1745px;top:270px;width:439px;height:42px"></div>
<div style="position:absolute;left:1744px;top:270px;width:2px;height:621px;background:#a6a9b0;"></div>
<div class="t" style="left:1761.0px;top:279.3px;font-size:24.91px;line-height:28.62px;color:#000;font-weight:bold;">Functions</div>
<div style="position:absolute;left:2158px;top:296px;width:12px;height:3px;background:#000;"></div>
<div class="btn" style="left:1759px;top:334.5px;width:118px;height:68px"></div>
<div class="t" style="left:1769.0px;top:357.0px;font-size:21.30px;line-height:24.47px;color:#000;">Histogram</div>
<div class="btn" style="left:1879px;top:334.5px;width:118px;height:68px"></div>
<div class="t" style="left:1899.6px;top:357.0px;font-size:21.30px;line-height:24.47px;color:#000;">Gamma</div>
<div class="btn" style="left:1999px;top:334.5px;width:118px;height:68px"></div>
<div class="t" style="left:2026.1px;top:343.1px;font-size:21.30px;line-height:24.47px;color:#000;">Colour</div>
<div class="t" style="left:2026.7px;top:370.4px;font-size:21.30px;line-height:24.47px;color:#000;">Mixing</div>
<div class="btn" style="left:1759px;top:404.5px;width:118px;height:68px"></div>
<div class="t" style="left:1794.6px;top:413.1px;font-size:21.30px;line-height:24.47px;color:#000;">View</div>
<div class="t" style="left:1778.4px;top:440.4px;font-size:21.30px;line-height:24.47px;color:#000;">Zoomed</div>
<div class="btn" style="left:1879px;top:404.5px;width:118px;height:68px"></div>
<div class="t" style="left:1914.6px;top:413.1px;font-size:21.30px;line-height:24.47px;color:#000;">View</div>
<div class="t" style="left:1893.7px;top:440.4px;font-size:21.30px;line-height:24.47px;color:#000;">Compare</div>
<div class="btn" style="left:1999px;top:404.5px;width:118px;height:68px"></div>
<div class="t" style="left:2034.6px;top:413.1px;font-size:21.30px;line-height:24.47px;color:#000;">View</div>
<div class="t" style="left:2011.9px;top:440.4px;font-size:21.30px;line-height:24.47px;color:#000;">Stacksize</div>
<div class="btn" style="left:1759px;top:474.5px;width:118px;height:68px"></div>
<div class="t" style="left:1779.6px;top:483.1px;font-size:21.30px;line-height:24.47px;color:#000;">Flip and</div>
<div class="t" style="left:1786.1px;top:510.4px;font-size:21.30px;line-height:24.47px;color:#000;">Rotate</div>
<div class="btn" style="left:1879px;top:474.5px;width:118px;height:68px"></div>
<div class="t" style="left:1914.4px;top:483.1px;font-size:21.30px;line-height:24.47px;color:#000;">RGB</div>
<div class="t" style="left:1913.8px;top:510.4px;font-size:21.30px;line-height:24.47px;color:#000;">Align</div>
<div class="btn" style="left:1999px;top:474.5px;width:118px;height:68px"></div>
<div class="t" style="left:2034.4px;top:481.1px;font-size:21.30px;line-height:24.47px;color:#000;">RGB</div>
<div class="t" style="left:2019.0px;top:508.4px;font-size:21.30px;line-height:24.47px;color:#000;">Balance</div>
<div class="btn" style="left:1759px;top:544.5px;width:118px;height:68px"></div>
<div class="t" style="left:1784.9px;top:553.1px;font-size:21.30px;line-height:24.47px;color:#000;">Resize</div>
<div class="t" style="left:1787.9px;top:580.4px;font-size:21.30px;line-height:24.47px;color:#000;">Image</div>
<div style="position:absolute;left:1879px;top:544.5px;width:118px;height:68px;border:2px solid #ffc83c;box-shadow:0 0 0 1px #b59a5a;background:linear-gradient(#ffd8b0 0%,#ffb060 28%,#ff9424 36%,#ffa848 60%,#ffd070 82%,#ffe9a8 100%)"></div>
<div class="t" style="left:1895.5px;top:553.1px;font-size:21.30px;line-height:24.47px;color:#000;">Denoise/</div>
<div class="t" style="left:1891.9px;top:580.4px;font-size:21.30px;line-height:24.47px;color:#000;">Deringing</div>
<div style="position:absolute;left:1999px;top:544.5px;width:118px;height:68px;border:2px solid #f4d070;box-shadow:0 0 0 1px #a89460;background:linear-gradient(#fffbe0 0%,#fff0b8 28%,#ffd95a 34%,#ffe078 65%,#ffeca0 100%)"></div>
<div class="t" style="left:2019.4px;top:553.1px;font-size:21.30px;line-height:24.47px;color:#000;">Wavelet</div>
<div class="t" style="left:2033.8px;top:580.4px;font-size:21.30px;line-height:24.47px;color:#000;">Filter</div>
<div class="btn" style="left:1759px;top:614.5px;width:118px;height:68px"></div>
<div class="t" style="left:1777.8px;top:637.0px;font-size:21.30px;line-height:24.47px;color:#000;">Masking</div>
<div class="btn" style="left:1879px;top:614.5px;width:118px;height:68px"></div>
<div class="t" style="left:1910.9px;top:623.1px;font-size:21.30px;line-height:24.47px;color:#000;">Show</div>
<div class="t" style="left:1890.1px;top:650.4px;font-size:21.30px;line-height:24.47px;color:#000;">Linegraph</div>
<div class="btn" style="left:1999px;top:614.5px;width:118px;height:68px"></div>
<div class="t" style="left:2014.3px;top:623.1px;font-size:21.30px;line-height:24.47px;color:#000;">Cropping</div>
<div class="t" style="left:2035.0px;top:650.4px;font-size:21.30px;line-height:24.47px;color:#000;">Area</div>
<div style="position:absolute;left:1745px;top:891px;width:439px;height:3px;background:linear-gradient(#aeb1b9,#eceef1);"></div>
<div class="panel" style="left:1745px;top:894px;width:439px;height:369px"></div>
<div class="hdr" style="left:1745px;top:894px;width:439px;height:47px"></div>
<div style="position:absolute;left:1744px;top:894px;width:2px;height:369px;background:#a6a9b0;"></div>
<div class="t" style="left:1760.8px;top:904.5px;font-size:25.48px;line-height:29.27px;color:#000;font-weight:bold;">Contrast/Brightness</div>
<div class="t" style="left:2029.0px;top:905.3px;font-size:24.60px;line-height:28.27px;color:#000;transform:scaleX(1.0476);transform-origin:0 0;">Hold</div>
<div class="t" style="left:2105.0px;top:905.3px;font-size:24.60px;line-height:28.27px;color:#000;transform:scaleX(0.9757);transform-origin:0 0;">Reset</div>
<div class="trk" style="left:1764px;top:950px;width:346px;height:18px"></div>
<div class="thm" style="left:1876px;top:948px"></div>
<div class="tick" style="left:1770px;top:977px"></div><div class="tick" style="left:2102px;top:977px"></div>
<div class="trk" style="left:1764px;top:990px;width:346px;height:18px"></div>
<div class="thm" style="left:1950px;top:988px"></div>
<div class="tick" style="left:1770px;top:1017px"></div><div class="tick" style="left:2102px;top:1017px"></div>
<div class="t" style="left:1789.3px;top:1017.8px;font-size:21.40px;line-height:24.59px;color:#000;">Contrast</div>
<div class="t" style="left:1983.7px;top:1017.8px;font-size:21.40px;line-height:24.59px;color:#000;">Brightness</div>
<div class="sp" style="left:1786px;top:1046px;width:113px;height:44px"></div>
<div class="sb" style="left:1858px;top:1049px;width:39px;height:38px"><svg width="34" height="33" viewBox="0 0 34 33"><line x1="0" y1="33" x2="34" y2="0" stroke="#8a8a8a" stroke-width="1.6"/><path d="M9.9 2 l6.4 6.6 h-4.2 v5.6 h-4.4 v-5.6 h-4.2z" fill="#000"/><path d="M24.5 31.0 l6.4 -6.6 h-4.2 v-5.6 h-4.4 v5.6 h-4.2z" fill="#000"/></svg></div>
<div class="t" style="left:1816.3px;top:1054.6px;font-size:21.40px;line-height:24.59px;color:#000;">133</div>
<div class="sp" style="left:1980px;top:1042px;width:114px;height:44px"></div>
<div class="sb" style="left:2052.5px;top:1045px;width:39.5px;height:38px"><svg width="34.5" height="33" viewBox="0 0 34.5 33"><line x1="0" y1="33" x2="34.5" y2="0" stroke="#8a8a8a" stroke-width="1.6"/><path d="M10.0 2 l6.4 6.6 h-4.2 v5.6 h-4.4 v-5.6 h-4.2z" fill="#000"/><path d="M24.8 31.0 l6.4 -6.6 h-4.2 v-5.6 h-4.4 v5.6 h-4.2z" fill="#000"/></svg></div>
<div class="t" style="left:2022.4px;top:1050.4px;font-size:21.40px;line-height:24.59px;color:#000;">14</div>
<div style="position:absolute;left:1745px;top:1263px;width:439px;height:3px;background:linear-gradient(#aeb1b9,#eceef1);"></div>
<div class="panel" style="left:1745px;top:1266px;width:439px;height:280px"></div>
<div class="hdr" style="left:1745px;top:1266px;width:439px;height:42px"></div>
<div style="position:absolute;left:1744px;top:1266px;width:2px;height:280px;background:#a6a9b0;"></div>
<div class="t" style="left:1764.0px;top:1275.6px;font-size:25.00px;line-height:28.73px;color:#000;transform:scaleX(1.0629);transform-origin:0 0;">Copy To</div>
<div class="t" style="left:1882.8px;top:1275.6px;font-size:25.00px;line-height:28.73px;color:#000;transform:scaleX(1.0574);transform-origin:0 0;">Load to</div>
<div class="t" style="left:2012.8px;top:1275.6px;font-size:25.00px;line-height:28.73px;color:#8d909a;transform:scaleX(1.0309);transform-origin:0 0;">Difference</div>
<div style="position:absolute;left:2158px;top:1292px;width:12px;height:3px;background:#000;"></div>
<div class="gb" style="left:1758.5px;top:1330.5px;width:327px;height:126px"></div>
<div style="position:absolute;left:1773.4px;top:1328.5px;width:63.59999999999991px;height:5px;background:#dadde3;"></div>
<div class="t" style="left:1773.7px;top:1318.3px;font-size:21.40px;line-height:24.59px;color:#000;">Toggle</div>
<div style="position:absolute;left:1774px;top:1358px;width:26px;height:26px;border-radius:50%;border:2px solid #6a6a6e;background:#d8dbe1"><i style="position:absolute;left:6px;top:6px;width:10px;height:10px;border-radius:50%;background:#6e6e72"></i></div>
<div style="position:absolute;left:1774px;top:1410px;width:26px;height:26px;border-radius:50%;border:2px solid #6a6a6e;background:#d8dbe1"></div>
<div class="t" style="left:1807.1px;top:1359.9px;font-size:21.40px;line-height:24.59px;color:#8d909a;">Current Image</div>
<div class="t" style="left:1808.9px;top:1412.9px;font-size:20.59px;line-height:23.66px;color:#8d909a;">Clipboard Image</div>
<div class="btn" style="left:1758.5px;top:1471px;width:259px;height:48px"></div>
<div class="t" style="left:1778.5px;top:1482.3px;font-size:21.40px;line-height:24.59px;color:#000;">Use file from Clipboard</div>
<div style="position:absolute;left:4px;top:1545.5px;width:2200px;height:44px;background:linear-gradient(#e8eaee 0%,#d6d9e0 18%,#c0c4ce 31%,#a9adb8 32.5%,#b4b8c2 65%,#c8cbd2 100%);"></div>
<div style="position:absolute;left:4px;top:1589.5px;width:2201px;height:2px;background:#fff;"></div>
<div style="position:absolute;left:2px;top:1591.5px;width:2204px;height:1px;background:#a0a0a0;"></div>
<div style="position:absolute;left:0px;top:1592.5px;width:2208px;height:1.5px;background:#dcdcdc;"></div>
<div style="position:absolute;left:8px;top:1552px;width:481px;height:32px;background:#aab2c2;"></div>
<div style="position:absolute;left:10px;top:1554px;width:477px;height:28px;background:linear-gradient(#ffffe2 0%,#fff6c4 14%,#ffeaa8 27%,#ffd448 28.5%,#ffdc68 60%,#ffe89c 100%);"></div>
<div class="t" style="left:211.3px;top:1556.7px;font-size:23.20px;line-height:26.66px;color:#000;font-weight:bold;transform:scaleX(1.2505);transform-origin:0 0;">100%</div>
<div style="position:absolute;left:492.5px;top:1556px;width:3px;height:25px;background:#f6f7f9;"></div>
<div style="position:absolute;left:985.5px;top:1556px;width:3px;height:25px;background:#f6f7f9;"></div>
<div style="position:absolute;left:1797.0px;top:1556px;width:3px;height:25px;background:#f6f7f9;"></div>
<div class="t" style="left:508.3px;top:1551.7px;font-size:26.16px;line-height:30.06px;color:#000;">layer setting changed</div>
<div class="t" style="left:1000.0px;top:1552.1px;font-size:25.74px;line-height:29.57px;color:#000;">X=469 Y=184 Stack=1 RGB=raw(0 0 1)</div>
<div class="t" style="left:1035.0px;top:1574.6px;font-size:12.00px;line-height:13.79px;color:#000;font-weight:bold;transform:scaleX(1.3168);transform-origin:0 0;">www.astronomy.com.cn</div>
<svg style="position:absolute;left:0;top:0" width="2208" height="1594" viewBox="0 0 2208 1594"><rect x="2196" y="1566.3" width="4" height="4" fill="#9498a4"/><rect x="2198" y="1568.3" width="4" height="4" fill="#fff"/><rect x="2188" y="1574.2" width="4" height="4" fill="#9498a4"/><rect x="2190" y="1576.2" width="4" height="4" fill="#fff"/><rect x="2196" y="1574.2" width="4" height="4" fill="#9498a4"/><rect x="2198" y="1576.2" width="4" height="4" fill="#fff"/><rect x="2180" y="1582.1" width="4" height="4" fill="#9498a4"/><rect x="2182" y="1584.1" width="4" height="4" fill="#fff"/><rect x="2188" y="1582.1" width="4" height="4" fill="#9498a4"/><rect x="2190" y="1584.1" width="4" height="4" fill="#fff"/><rect x="2196" y="1582.1" width="4" height="4" fill="#9498a4"/><rect x="2198" y="1584.1" width="4" height="4" fill="#fff"/></svg>
</body></html>
